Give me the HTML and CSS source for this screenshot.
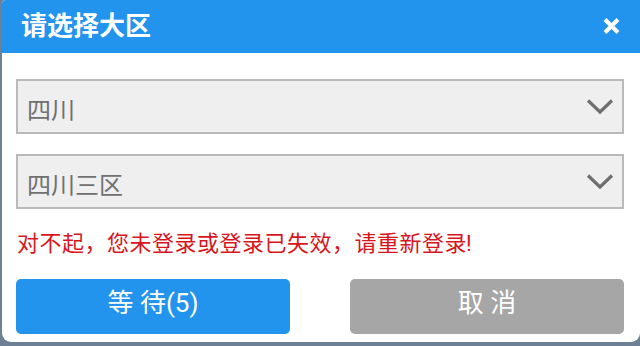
FILE: index.html
```html
<!DOCTYPE html>
<html lang="zh-CN">
<head>
<meta charset="utf-8">
<title>请选择大区</title>
<link rel="stylesheet" href="styles.css">
</head>
<body>
<div class="dialog">
  <div class="header">
    <span class="title">请选择大区</span>
    <svg class="close" width="17" height="16" viewBox="0 0 17 16" aria-label="关闭">
      <path d="M2 1.5 L15 14.5 M15 1.5 L2 14.5" stroke="#fff" stroke-width="4" fill="none"/>
    </svg>
  </div>
  <div class="body">
    <div class="select">
      <span class="select-text">四川</span>
      <svg class="chev" width="28" height="17" viewBox="0 0 28 17">
        <polyline points="2,2.5 14,14 26,2.5" stroke="#6f6f6f" stroke-width="3.2" fill="none"/>
      </svg>
    </div>
    <div class="select second">
      <span class="select-text">四川三区</span>
      <svg class="chev" width="28" height="17" viewBox="0 0 28 17">
        <polyline points="2,2.5 14,14 26,2.5" stroke="#6f6f6f" stroke-width="3.2" fill="none"/>
      </svg>
    </div>
    <div class="error">对不起，您未登录或登录已失效，请重新登录<span class="bang">!</span></div>
    <div class="buttons">
      <div class="btn btn-wait">等 待(5)</div>
      <div class="btn btn-cancel">取 消</div>
    </div>
  </div>
</div>
</body>
</html>
```
FILE: styles.css
```css
html, body {
  margin: 0;
  padding: 0;
}
body {
  width: 640px;
  height: 346px;
  overflow: hidden;
  background: #6d8096;
  font-family: Roboto, "Noto Sans CJK SC", sans-serif;
}
.dialog {
  margin-left: 2px;
  width: 638px;
  height: 342px;
  background: #fff;
  border-radius: 4px 0 9px 9px;
  overflow: hidden;
  display: flex;
  flex-direction: column;
}
.header {
  height: 53px;
  flex: none;
  box-sizing: border-box;
  background: #2394ee;
  display: flex;
  align-items: center;
  justify-content: space-between;
  padding: 0 20px 0 19px;
}
.title {
  color: #fff;
  font-family: "Noto Sans CJK SC", sans-serif;
  font-weight: 700;
  font-size: 26px;
  line-height: 30px;
  padding-bottom: 6px;
}
.close {
  display: block;
  margin-bottom: 1px;
}
.body {
  padding: 26px 16px 0 14px;
  display: flex;
  flex-direction: column;
}
.select {
  height: 55px;
  box-sizing: border-box;
  border: 2px solid #bababa;
  background: #efefef;
  display: flex;
  align-items: center;
  justify-content: space-between;
  padding: 5px 8px 0 9px;
}
.select.second {
  margin-top: 20px;
}
.select-text {
  font-family: "Noto Sans CJK SC", sans-serif;
  font-size: 24px;
  line-height: 30px;
  color: #707070;
}
.chev {
  display: block;
  margin-bottom: 6px;
}
.error {
  margin-top: 17px;
  font-family: "Noto Sans CJK SC", sans-serif;
  font-size: 22px;
  letter-spacing: 0.5px;
  line-height: 30px;
  color: #d8151d;
  padding-left: 1px;
}
.bang {
  font-family: Roboto, sans-serif;
  margin-left: -1px;
}
.buttons {
  margin-top: 20px;
  display: flex;
  justify-content: space-between;
}
.btn {
  width: 274px;
  height: 55px;
  box-sizing: border-box;
  border-radius: 5px;
  display: flex;
  align-items: center;
  justify-content: center;
  color: #fff;
  font-size: 26px;
  line-height: 30px;
  padding-bottom: 7px;
}
.btn-wait {
  background: #2394ee;
}
.btn-cancel {
  background: #a6a6a6;
}
```
